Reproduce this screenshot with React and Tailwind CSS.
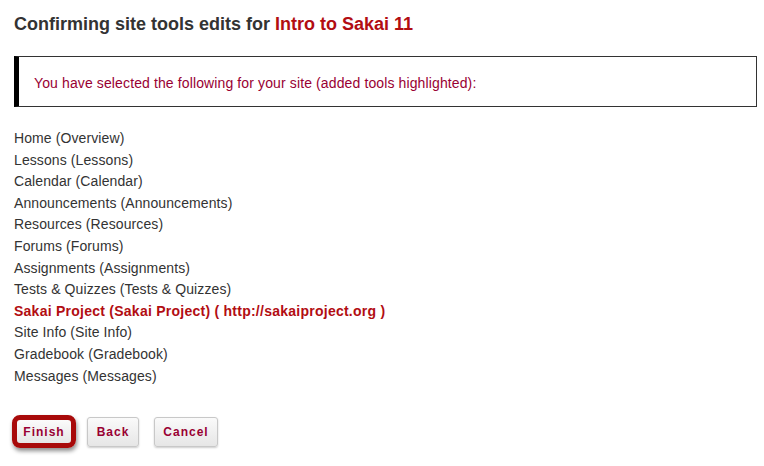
export default function App() {
  const tools = [
    "Home (Overview)",
    "Lessons (Lessons)",
    "Calendar (Calendar)",
    "Announcements (Announcements)",
    "Resources (Resources)",
    "Forums (Forums)",
    "Assignments (Assignments)",
    "Tests & Quizzes (Tests & Quizzes)",
  ];
  const tools2 = ["Site Info (Site Info)", "Gradebook (Gradebook)", "Messages (Messages)"];
  return (
    <div className="w-[764px] h-[466px] bg-white font-['Liberation_Sans',Arial,sans-serif] text-[#333] overflow-hidden">
      <div className="pl-[14px] pr-[7px]">
        <h1 className="pt-[12px] text-[18px] leading-[24px] font-bold text-[#333]">
          Confirming site tools edits for <span className="text-[#b20d12]">Intro to Sakai 11</span>
        </h1>
        <div className="mt-[20px] h-[51px] border border-[#333] border-l-[5px] border-l-black flex items-center pl-[15px] pt-[3px] text-[14px] tracking-[0.12px] text-[#990033]">
          You have selected the following for your site (added tools highlighted):
        </div>
        <div className="mt-[21px] text-[14px] leading-[21.6px] tracking-[0.1px]">
          {tools.map((t) => (
            <div key={t}>{t}</div>
          ))}
          <div className="font-bold tracking-[0.25px] text-[#b20d12]">Sakai Project (Sakai Project) ( http://sakaiproject.org )</div>
          {tools2.map((t) => (
            <div key={t}>{t}</div>
          ))}
        </div>
        <div className="mt-[28px] flex items-start">
          <div className="ml-[-2px] w-[64px] h-[33px] rounded-[8px] border-[5px] border-[#a80a0a] bg-gradient-to-b from-[#fbfbfb] to-[#e6e6e6] shadow-[1px_3px_4px_rgba(0,0,0,0.45)] flex items-center justify-center text-[12px] font-bold tracking-[1px] text-[#990033]">
            Finish
          </div>
          <button className="mt-[2px] ml-[11px] w-[52px] h-[30px] rounded-[3px] border border-[#c8c8c8] bg-gradient-to-b from-[#fafafa] to-[#e6e6e6] shadow-[0_1px_2px_rgba(0,0,0,0.2)] text-[12px] font-bold tracking-[1px] text-[#990033]">
            Back
          </button>
          <button className="mt-[2px] ml-[15px] w-[64px] h-[30px] rounded-[3px] border border-[#c8c8c8] bg-gradient-to-b from-[#fafafa] to-[#e6e6e6] shadow-[0_1px_2px_rgba(0,0,0,0.2)] text-[12px] font-bold tracking-[1px] text-[#990033]">
            Cancel
          </button>
        </div>
      </div>
    </div>
  );
}
